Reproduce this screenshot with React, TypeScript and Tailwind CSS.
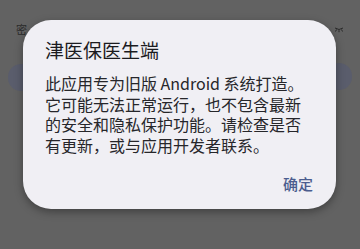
import * as React from 'react';

export default function App() {
  return (
    <div
      className="relative w-[360px] h-[249px] overflow-hidden bg-[#626262]"
      style={{ fontFamily: '"Noto Sans CJK SC", "Noto Sans", sans-serif' }}
    >
      {/* dimmed page behind the dialog */}
      <span className="absolute left-[16px] top-[22px] text-[11px] leading-[14px] text-[#2a2a2a]">密</span>
      <div className="absolute left-[8px] top-[64px] w-[26px] h-[27px] rounded-full bg-[#5a5d6c]" />
      <div className="absolute left-[326px] top-[63px] w-[26px] h-[27px] rounded-full bg-[#5a5d6c]" />
      <svg className="absolute left-[334px] top-[27px]" width="10" height="6" viewBox="0 0 10 6">
        <path d="M1 1 Q5 4 9 1 M2.5 2.5 L1.5 4.5 M5 3.2 L5 5.2 M7.5 2.5 L8.5 4.5" stroke="#222" strokeWidth="0.9" fill="none" />
      </svg>

      <div className="relative pt-[20px] pl-[23px]">
        <div className="w-[313px] h-[189px] rounded-[28px] bg-[#f0eff4] shadow-[0_3px_8px_rgba(0,0,0,0.35)] pl-[22px] pr-[20px] pt-[17px] flex flex-col">
          <div className="text-[19px] leading-[26px] text-[#1b1b1f]">津医保医生端</div>
          <div className="mt-[10px] text-[16px] leading-[20.5px] text-[#26262a] whitespace-nowrap">
            <div>此应用专为旧版 Android 系统打造。</div>
            <div>它可能无法正常运行，也不包含最新</div>
            <div>的安全和隐私保护功能。请检查是否</div>
            <div>有更新，或与应用开发者联系。</div>
          </div>
          <div className="flex justify-end mt-[19px] pr-[3px]">
            <span className="text-[15px] leading-[20px] text-[#4b5d8e] font-medium">确定</span>
          </div>
        </div>
      </div>
    </div>
  );
}
